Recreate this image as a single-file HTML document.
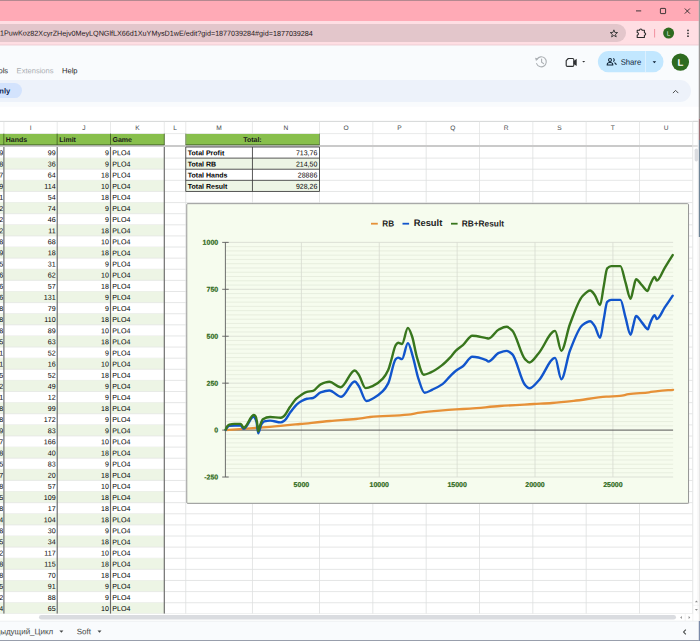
<!DOCTYPE html>
<html><head><meta charset="utf-8"><style>
html,body{margin:0;padding:0;width:700px;height:641px;overflow:hidden;background:#fff;}
svg{display:block;font-family:"Liberation Sans", sans-serif;}
</style></head><body>
<svg width="700" height="641" viewBox="0 0 700 641"><rect x="0.00" y="0.00" width="700.00" height="21.00" fill="#FFAAB6" /><rect x="0.00" y="0.00" width="700.00" height="1.00" fill="#B58890" /><rect x="0.00" y="21.00" width="700.00" height="24.20" fill="#FFDEE3" /><rect x="-30" y="24" width="656" height="18" rx="9" fill="#E3C6CB"/><text x="0.00" y="35.60" font-size="7.19" fill="#1E1719" text-anchor="start" font-weight="normal" transform="rotate(0.06 0.00 35.60)" >1PuwKoz82XcyrZHejv0MeyLQNGlfLX66d1XuYMysD1wE/edit?gid=1877039284#gid=1877039284</text><path d="M613.90 29.85 L614.87 32.42 L617.61 32.54 L615.47 34.26 L616.19 36.91 L613.90 35.40 L611.61 36.91 L612.33 34.26 L610.19 32.54 L612.93 32.42 Z" fill="none" stroke="#3a3a3a" stroke-width="0.95" stroke-linejoin="round"/><path d="M637.2 30.2 h2.3 a1.3 1.3 0 0 1 2.6 0 h2.3 v2.5 a1.3 1.3 0 0 1 0 2.6 v2.2 h-7.2 v-2.4 a1.3 1.3 0 0 0 0 -2.6 z" fill="none" stroke="#2a2a2a" stroke-width="1.05" stroke-linejoin="round"/><rect x="654.20" y="29.00" width="0.90" height="8.50" fill="#F08898" /><circle cx="668.6" cy="33.1" r="5.5" fill="#2E6B20"/><text x="668.60" y="35.60" font-size="6.2" fill="#E8F0E0" text-anchor="middle" font-weight="normal" transform="rotate(0.06 668.60 35.60)" >L</text><circle cx="688" cy="30.4" r="0.85" fill="#2a2a2a"/><circle cx="688" cy="33.3" r="0.85" fill="#2a2a2a"/><circle cx="688" cy="36.2" r="0.85" fill="#2a2a2a"/><line x1="636.00" y1="10.90" x2="641.20" y2="10.90" stroke="#2a2a2a" stroke-width="0.9" /><rect x="660.4" y="8.4" width="5.2" height="5.2" fill="none" stroke="#2a2a2a" stroke-width="0.9" rx="0.6"/><line x1="684.80" y1="8.50" x2="689.90" y2="13.60" stroke="#2a2a2a" stroke-width="0.9" /><line x1="689.90" y1="8.50" x2="684.80" y2="13.60" stroke="#2a2a2a" stroke-width="0.9" /><rect x="0.00" y="45.20" width="700.00" height="61.60" fill="#F9FBFD" /><rect x="0.00" y="44.60" width="700.00" height="0.80" fill="#E9C9CF" /><rect x="0.00" y="106.80" width="700.00" height="14.60" fill="#FFFFFF" /><text x="-9.50" y="73.30" font-size="7.55" fill="#1F1F1F" text-anchor="start" font-weight="normal" transform="rotate(0.06 -9.50 73.30)" >Tools</text><text x="16.60" y="73.30" font-size="7.55" fill="#A8ACB0" text-anchor="start" font-weight="normal" transform="rotate(0.06 16.60 73.30)" >Extensions</text><text x="62.00" y="73.30" font-size="7.55" fill="#1F1F1F" text-anchor="start" font-weight="normal" transform="rotate(0.06 62.00 73.30)" >Help</text><rect x="-20" y="80.1" width="711" height="21.9" rx="10.9" fill="#EDF2FA"/><rect x="-30" y="83.1" width="52" height="15" rx="7.5" fill="#D3E3FD"/><text x="10.20" y="93.60" font-size="7.55" fill="#0B2552" text-anchor="end" font-weight="bold" transform="rotate(0.06 10.20 93.60)" >nly</text><path d="M672.9 93.1 L675.6 90.4 L678.3 93.1" fill="none" stroke="#444746" stroke-width="0.95"/><g fill="none" stroke="#ACB0B4" stroke-width="1.1" stroke-linecap="round"><path d="M537.0 59.2 A5.0 5.0 0 1 1 536.6 63.6"/><path d="M541.6 59.0 v3.1 l2.0 1.5"/></g><path d="M535.0 57.8 L538.6 58.4 L536.0 61.0 Z" fill="#ACB0B4"/><g fill="none" stroke="#2f3133" stroke-width="1.15" stroke-linejoin="round"><path d="M566.2 60.6 L568.3 58.5 H572.6 Q573.8 58.5 573.8 59.7 V65.2 Q573.8 66.4 572.6 66.4 H567.4 Q566.2 66.4 566.2 65.2 Z"/></g><path d="M573.6 61.0 L576.7 58.8 V66.1 L573.6 63.9 Z" fill="#2f3133"/><path d="M582.2 61.0 h3.0 l-1.5 1.6 z" fill="#2f3133"/><rect x="597.9" y="51.1" width="65.6" height="21.2" rx="10.6" fill="#C2E7FF"/><rect x="645.00" y="51.10" width="0.70" height="21.20" fill="#E8F4FF" /><g fill="none" stroke="#0E2235" stroke-width="1.05"><circle cx="610.0" cy="60.0" r="1.45"/><path d="M607.2 65.0 v-0.5 q0-2.0 2.8-2.0 q2.8 0 2.8 2.0 v0.5 z"/><path d="M613.2 58.6 a1.45 1.45 0 0 1 0 2.8"/><path d="M614.3 62.7 q1.8 0.4 1.8 1.9 v0.4"/></g><text x="620.70" y="64.70" font-size="7.9" fill="#0E2235" text-anchor="start" font-weight="normal" transform="rotate(0.06 620.70 64.70)" textLength="20.5" lengthAdjust="spacingAndGlyphs">Share</text><path d="M652.6 61.2 h3.6 l-1.8 2.0 z" fill="#0E2235"/><circle cx="680.4" cy="62.1" r="8.7" fill="#2E6B20"/><text x="680.40" y="65.70" font-size="9.6" fill="#FFFFFF" text-anchor="middle" font-weight="bold" transform="rotate(0.06 680.40 65.70)" >L</text><rect x="0.00" y="121.40" width="692.83" height="12.20" fill="#FFFFFF" /><line x1="0.00" y1="121.40" x2="698.00" y2="121.40" stroke="#CFD1D1" stroke-width="0.9" /><line x1="0.00" y1="133.60" x2="692.83" y2="133.60" stroke="#E0E1E1" stroke-width="0.7" /><text x="30.55" y="129.90" font-size="6.6" fill="#45484C" text-anchor="middle" font-weight="normal" transform="rotate(0.06 30.55 129.90)" >I</text><text x="83.85" y="129.90" font-size="6.6" fill="#45484C" text-anchor="middle" font-weight="normal" transform="rotate(0.06 83.85 129.90)" >J</text><text x="137.40" y="129.90" font-size="6.6" fill="#45484C" text-anchor="middle" font-weight="normal" transform="rotate(0.06 137.40 129.90)" >K</text><text x="175.03" y="129.90" font-size="6.6" fill="#45484C" text-anchor="middle" font-weight="normal" transform="rotate(0.06 175.03 129.90)" >L</text><text x="219.10" y="129.90" font-size="6.6" fill="#45484C" text-anchor="middle" font-weight="normal" transform="rotate(0.06 219.10 129.90)" >M</text><text x="285.98" y="129.90" font-size="6.6" fill="#45484C" text-anchor="middle" font-weight="normal" transform="rotate(0.06 285.98 129.90)" >N</text><text x="346.16" y="129.90" font-size="6.6" fill="#45484C" text-anchor="middle" font-weight="normal" transform="rotate(0.06 346.16 129.90)" >O</text><text x="399.50" y="129.90" font-size="6.6" fill="#45484C" text-anchor="middle" font-weight="normal" transform="rotate(0.06 399.50 129.90)" >P</text><text x="452.83" y="129.90" font-size="6.6" fill="#45484C" text-anchor="middle" font-weight="normal" transform="rotate(0.06 452.83 129.90)" >Q</text><text x="506.17" y="129.90" font-size="6.6" fill="#45484C" text-anchor="middle" font-weight="normal" transform="rotate(0.06 506.17 129.90)" >R</text><text x="559.50" y="129.90" font-size="6.6" fill="#45484C" text-anchor="middle" font-weight="normal" transform="rotate(0.06 559.50 129.90)" >S</text><text x="612.83" y="129.90" font-size="6.6" fill="#45484C" text-anchor="middle" font-weight="normal" transform="rotate(0.06 612.83 129.90)" >T</text><text x="666.16" y="129.90" font-size="6.6" fill="#45484C" text-anchor="middle" font-weight="normal" transform="rotate(0.06 666.16 129.90)" >U</text><line x1="3.90" y1="121.40" x2="3.90" y2="133.60" stroke="#E0E1E1" stroke-width="0.7" /><line x1="57.20" y1="121.40" x2="57.20" y2="133.60" stroke="#E0E1E1" stroke-width="0.7" /><line x1="110.50" y1="121.40" x2="110.50" y2="133.60" stroke="#E0E1E1" stroke-width="0.7" /><line x1="164.30" y1="121.40" x2="164.30" y2="133.60" stroke="#E0E1E1" stroke-width="0.7" /><line x1="185.75" y1="121.40" x2="185.75" y2="133.60" stroke="#E0E1E1" stroke-width="0.7" /><line x1="252.45" y1="121.40" x2="252.45" y2="133.60" stroke="#E0E1E1" stroke-width="0.7" /><line x1="319.50" y1="121.40" x2="319.50" y2="133.60" stroke="#E0E1E1" stroke-width="0.7" /><line x1="372.83" y1="121.40" x2="372.83" y2="133.60" stroke="#E0E1E1" stroke-width="0.7" /><line x1="426.16" y1="121.40" x2="426.16" y2="133.60" stroke="#E0E1E1" stroke-width="0.7" /><line x1="479.50" y1="121.40" x2="479.50" y2="133.60" stroke="#E0E1E1" stroke-width="0.7" /><line x1="532.83" y1="121.40" x2="532.83" y2="133.60" stroke="#E0E1E1" stroke-width="0.7" /><line x1="586.16" y1="121.40" x2="586.16" y2="133.60" stroke="#E0E1E1" stroke-width="0.7" /><line x1="639.50" y1="121.40" x2="639.50" y2="133.60" stroke="#E0E1E1" stroke-width="0.7" /><line x1="692.83" y1="121.40" x2="692.83" y2="133.60" stroke="#E0E1E1" stroke-width="0.7" /><rect x="0.00" y="133.95" width="164.30" height="11.05" fill="#88BF4C" /><rect x="185.75" y="133.95" width="133.75" height="11.05" fill="#88BF4C" /><text x="5.80" y="141.90" font-size="7.0" fill="#1B1B1B" text-anchor="start" font-weight="bold" transform="rotate(0.06 5.80 141.90)" >Hands</text><text x="59.20" y="141.90" font-size="7.0" fill="#1B1B1B" text-anchor="start" font-weight="bold" transform="rotate(0.06 59.20 141.90)" >Limit</text><text x="112.50" y="141.90" font-size="7.0" fill="#1B1B1B" text-anchor="start" font-weight="bold" transform="rotate(0.06 112.50 141.90)" >Game</text><text x="252.45" y="141.90" font-size="7.0" fill="#1B1B1B" text-anchor="middle" font-weight="bold" transform="rotate(0.06 252.45 141.90)" >Total:</text><line x1="185.75" y1="133.60" x2="185.75" y2="145.00" stroke="#DEDFDF" stroke-width="0.7" /><line x1="319.50" y1="133.60" x2="319.50" y2="145.00" stroke="#DEDFDF" stroke-width="0.7" /><line x1="372.83" y1="133.60" x2="372.83" y2="145.00" stroke="#DEDFDF" stroke-width="0.7" /><line x1="426.16" y1="133.60" x2="426.16" y2="145.00" stroke="#DEDFDF" stroke-width="0.7" /><line x1="479.50" y1="133.60" x2="479.50" y2="145.00" stroke="#DEDFDF" stroke-width="0.7" /><line x1="532.83" y1="133.60" x2="532.83" y2="145.00" stroke="#DEDFDF" stroke-width="0.7" /><line x1="586.16" y1="133.60" x2="586.16" y2="145.00" stroke="#DEDFDF" stroke-width="0.7" /><line x1="639.50" y1="133.60" x2="639.50" y2="145.00" stroke="#DEDFDF" stroke-width="0.7" /><line x1="692.83" y1="133.60" x2="692.83" y2="145.00" stroke="#DEDFDF" stroke-width="0.7" /><line x1="3.80" y1="133.60" x2="3.80" y2="145.00" stroke="#3d5a22" stroke-width="0.8" /><line x1="57.15" y1="133.60" x2="57.15" y2="145.00" stroke="#3d5a22" stroke-width="0.8" /><line x1="110.50" y1="133.60" x2="110.50" y2="145.00" stroke="#3d5a22" stroke-width="0.8" /><line x1="164.30" y1="133.60" x2="164.30" y2="145.00" stroke="#3d5a22" stroke-width="0.8" /><line x1="185.75" y1="133.60" x2="185.75" y2="145.00" stroke="#3d5a22" stroke-width="0.6" /><line x1="319.50" y1="133.60" x2="319.50" y2="145.00" stroke="#3d5a22" stroke-width="0.6" /><rect x="0.00" y="145.00" width="692.83" height="2.00" fill="#CACACA" /><line x1="0.00" y1="144.80" x2="164.30" y2="144.80" stroke="#3F5A2A" stroke-width="0.8" /><line x1="185.75" y1="144.80" x2="319.50" y2="144.80" stroke="#3F5A2A" stroke-width="0.8" /><line x1="164.30" y1="158.12" x2="692.83" y2="158.12" stroke="#DEDFDF" stroke-width="0.8" /><line x1="0.00" y1="158.12" x2="164.30" y2="158.12" stroke="#E2E4E2" stroke-width="0.7" /><text x="3.20" y="155.35" font-size="7.1" fill="#000000" text-anchor="end" font-weight="normal" transform="rotate(0.06 3.20 155.35)" >9</text><text x="55.60" y="155.35" font-size="7.1" fill="#000000" text-anchor="end" font-weight="normal" transform="rotate(0.06 55.60 155.35)" >99</text><text x="108.90" y="155.35" font-size="7.1" fill="#000000" text-anchor="end" font-weight="normal" transform="rotate(0.06 108.90 155.35)" >9</text><text x="112.30" y="155.35" font-size="7.1" fill="#000000" text-anchor="start" font-weight="normal" transform="rotate(0.06 112.30 155.35)" >PLO4</text><rect x="0.00" y="158.12" width="164.30" height="11.12" fill="#EDF5E5" /><line x1="164.30" y1="169.23" x2="692.83" y2="169.23" stroke="#DEDFDF" stroke-width="0.8" /><line x1="0.00" y1="169.23" x2="164.30" y2="169.23" stroke="#E2E4E2" stroke-width="0.7" /><text x="3.20" y="166.47" font-size="7.1" fill="#000000" text-anchor="end" font-weight="normal" transform="rotate(0.06 3.20 166.47)" >8</text><text x="55.60" y="166.47" font-size="7.1" fill="#000000" text-anchor="end" font-weight="normal" transform="rotate(0.06 55.60 166.47)" >36</text><text x="108.90" y="166.47" font-size="7.1" fill="#000000" text-anchor="end" font-weight="normal" transform="rotate(0.06 108.90 166.47)" >9</text><text x="112.30" y="166.47" font-size="7.1" fill="#000000" text-anchor="start" font-weight="normal" transform="rotate(0.06 112.30 166.47)" >PLO4</text><line x1="164.30" y1="180.34" x2="692.83" y2="180.34" stroke="#DEDFDF" stroke-width="0.8" /><line x1="0.00" y1="180.34" x2="164.30" y2="180.34" stroke="#E2E4E2" stroke-width="0.7" /><text x="3.20" y="177.58" font-size="7.1" fill="#000000" text-anchor="end" font-weight="normal" transform="rotate(0.06 3.20 177.58)" >7</text><text x="55.60" y="177.58" font-size="7.1" fill="#000000" text-anchor="end" font-weight="normal" transform="rotate(0.06 55.60 177.58)" >64</text><text x="108.90" y="177.58" font-size="7.1" fill="#000000" text-anchor="end" font-weight="normal" transform="rotate(0.06 108.90 177.58)" >18</text><text x="112.30" y="177.58" font-size="7.1" fill="#000000" text-anchor="start" font-weight="normal" transform="rotate(0.06 112.30 177.58)" >PLO4</text><rect x="0.00" y="180.34" width="164.30" height="11.12" fill="#EDF5E5" /><line x1="164.30" y1="191.46" x2="692.83" y2="191.46" stroke="#DEDFDF" stroke-width="0.8" /><line x1="0.00" y1="191.46" x2="164.30" y2="191.46" stroke="#E2E4E2" stroke-width="0.7" /><text x="3.20" y="188.69" font-size="7.1" fill="#000000" text-anchor="end" font-weight="normal" transform="rotate(0.06 3.20 188.69)" >9</text><text x="55.60" y="188.69" font-size="7.1" fill="#000000" text-anchor="end" font-weight="normal" transform="rotate(0.06 55.60 188.69)" >114</text><text x="108.90" y="188.69" font-size="7.1" fill="#000000" text-anchor="end" font-weight="normal" transform="rotate(0.06 108.90 188.69)" >10</text><text x="112.30" y="188.69" font-size="7.1" fill="#000000" text-anchor="start" font-weight="normal" transform="rotate(0.06 112.30 188.69)" >PLO4</text><line x1="164.30" y1="202.58" x2="692.83" y2="202.58" stroke="#DEDFDF" stroke-width="0.8" /><line x1="0.00" y1="202.58" x2="164.30" y2="202.58" stroke="#E2E4E2" stroke-width="0.7" /><text x="3.20" y="199.81" font-size="7.1" fill="#000000" text-anchor="end" font-weight="normal" transform="rotate(0.06 3.20 199.81)" >1</text><text x="55.60" y="199.81" font-size="7.1" fill="#000000" text-anchor="end" font-weight="normal" transform="rotate(0.06 55.60 199.81)" >54</text><text x="108.90" y="199.81" font-size="7.1" fill="#000000" text-anchor="end" font-weight="normal" transform="rotate(0.06 108.90 199.81)" >18</text><text x="112.30" y="199.81" font-size="7.1" fill="#000000" text-anchor="start" font-weight="normal" transform="rotate(0.06 112.30 199.81)" >PLO4</text><rect x="0.00" y="202.57" width="164.30" height="11.12" fill="#EDF5E5" /><line x1="164.30" y1="213.69" x2="692.83" y2="213.69" stroke="#DEDFDF" stroke-width="0.8" /><line x1="0.00" y1="213.69" x2="164.30" y2="213.69" stroke="#E2E4E2" stroke-width="0.7" /><text x="3.20" y="210.92" font-size="7.1" fill="#000000" text-anchor="end" font-weight="normal" transform="rotate(0.06 3.20 210.92)" >2</text><text x="55.60" y="210.92" font-size="7.1" fill="#000000" text-anchor="end" font-weight="normal" transform="rotate(0.06 55.60 210.92)" >74</text><text x="108.90" y="210.92" font-size="7.1" fill="#000000" text-anchor="end" font-weight="normal" transform="rotate(0.06 108.90 210.92)" >9</text><text x="112.30" y="210.92" font-size="7.1" fill="#000000" text-anchor="start" font-weight="normal" transform="rotate(0.06 112.30 210.92)" >PLO4</text><line x1="164.30" y1="224.81" x2="692.83" y2="224.81" stroke="#DEDFDF" stroke-width="0.8" /><line x1="0.00" y1="224.81" x2="164.30" y2="224.81" stroke="#E2E4E2" stroke-width="0.7" /><text x="3.20" y="222.04" font-size="7.1" fill="#000000" text-anchor="end" font-weight="normal" transform="rotate(0.06 3.20 222.04)" >2</text><text x="55.60" y="222.04" font-size="7.1" fill="#000000" text-anchor="end" font-weight="normal" transform="rotate(0.06 55.60 222.04)" >46</text><text x="108.90" y="222.04" font-size="7.1" fill="#000000" text-anchor="end" font-weight="normal" transform="rotate(0.06 108.90 222.04)" >9</text><text x="112.30" y="222.04" font-size="7.1" fill="#000000" text-anchor="start" font-weight="normal" transform="rotate(0.06 112.30 222.04)" >PLO4</text><rect x="0.00" y="224.81" width="164.30" height="11.12" fill="#EDF5E5" /><line x1="164.30" y1="235.92" x2="692.83" y2="235.92" stroke="#DEDFDF" stroke-width="0.8" /><line x1="0.00" y1="235.92" x2="164.30" y2="235.92" stroke="#E2E4E2" stroke-width="0.7" /><text x="3.20" y="233.16" font-size="7.1" fill="#000000" text-anchor="end" font-weight="normal" transform="rotate(0.06 3.20 233.16)" >2</text><text x="55.60" y="233.16" font-size="7.1" fill="#000000" text-anchor="end" font-weight="normal" transform="rotate(0.06 55.60 233.16)" >11</text><text x="108.90" y="233.16" font-size="7.1" fill="#000000" text-anchor="end" font-weight="normal" transform="rotate(0.06 108.90 233.16)" >18</text><text x="112.30" y="233.16" font-size="7.1" fill="#000000" text-anchor="start" font-weight="normal" transform="rotate(0.06 112.30 233.16)" >PLO4</text><line x1="164.30" y1="247.04" x2="692.83" y2="247.04" stroke="#DEDFDF" stroke-width="0.8" /><line x1="0.00" y1="247.04" x2="164.30" y2="247.04" stroke="#E2E4E2" stroke-width="0.7" /><text x="3.20" y="244.27" font-size="7.1" fill="#000000" text-anchor="end" font-weight="normal" transform="rotate(0.06 3.20 244.27)" >8</text><text x="55.60" y="244.27" font-size="7.1" fill="#000000" text-anchor="end" font-weight="normal" transform="rotate(0.06 55.60 244.27)" >68</text><text x="108.90" y="244.27" font-size="7.1" fill="#000000" text-anchor="end" font-weight="normal" transform="rotate(0.06 108.90 244.27)" >10</text><text x="112.30" y="244.27" font-size="7.1" fill="#000000" text-anchor="start" font-weight="normal" transform="rotate(0.06 112.30 244.27)" >PLO4</text><rect x="0.00" y="247.03" width="164.30" height="11.12" fill="#EDF5E5" /><line x1="164.30" y1="258.15" x2="692.83" y2="258.15" stroke="#DEDFDF" stroke-width="0.8" /><line x1="0.00" y1="258.15" x2="164.30" y2="258.15" stroke="#E2E4E2" stroke-width="0.7" /><text x="3.20" y="255.38" font-size="7.1" fill="#000000" text-anchor="end" font-weight="normal" transform="rotate(0.06 3.20 255.38)" >9</text><text x="55.60" y="255.38" font-size="7.1" fill="#000000" text-anchor="end" font-weight="normal" transform="rotate(0.06 55.60 255.38)" >18</text><text x="108.90" y="255.38" font-size="7.1" fill="#000000" text-anchor="end" font-weight="normal" transform="rotate(0.06 108.90 255.38)" >18</text><text x="112.30" y="255.38" font-size="7.1" fill="#000000" text-anchor="start" font-weight="normal" transform="rotate(0.06 112.30 255.38)" >PLO4</text><line x1="164.30" y1="269.26" x2="692.83" y2="269.26" stroke="#DEDFDF" stroke-width="0.8" /><line x1="0.00" y1="269.26" x2="164.30" y2="269.26" stroke="#E2E4E2" stroke-width="0.7" /><text x="3.20" y="266.50" font-size="7.1" fill="#000000" text-anchor="end" font-weight="normal" transform="rotate(0.06 3.20 266.50)" >5</text><text x="55.60" y="266.50" font-size="7.1" fill="#000000" text-anchor="end" font-weight="normal" transform="rotate(0.06 55.60 266.50)" >31</text><text x="108.90" y="266.50" font-size="7.1" fill="#000000" text-anchor="end" font-weight="normal" transform="rotate(0.06 108.90 266.50)" >9</text><text x="112.30" y="266.50" font-size="7.1" fill="#000000" text-anchor="start" font-weight="normal" transform="rotate(0.06 112.30 266.50)" >PLO4</text><rect x="0.00" y="269.26" width="164.30" height="11.12" fill="#EDF5E5" /><line x1="164.30" y1="280.38" x2="692.83" y2="280.38" stroke="#DEDFDF" stroke-width="0.8" /><line x1="0.00" y1="280.38" x2="164.30" y2="280.38" stroke="#E2E4E2" stroke-width="0.7" /><text x="3.20" y="277.62" font-size="7.1" fill="#000000" text-anchor="end" font-weight="normal" transform="rotate(0.06 3.20 277.62)" >6</text><text x="55.60" y="277.62" font-size="7.1" fill="#000000" text-anchor="end" font-weight="normal" transform="rotate(0.06 55.60 277.62)" >62</text><text x="108.90" y="277.62" font-size="7.1" fill="#000000" text-anchor="end" font-weight="normal" transform="rotate(0.06 108.90 277.62)" >10</text><text x="112.30" y="277.62" font-size="7.1" fill="#000000" text-anchor="start" font-weight="normal" transform="rotate(0.06 112.30 277.62)" >PLO4</text><line x1="164.30" y1="291.50" x2="692.83" y2="291.50" stroke="#DEDFDF" stroke-width="0.8" /><line x1="0.00" y1="291.50" x2="164.30" y2="291.50" stroke="#E2E4E2" stroke-width="0.7" /><text x="3.20" y="288.73" font-size="7.1" fill="#000000" text-anchor="end" font-weight="normal" transform="rotate(0.06 3.20 288.73)" >6</text><text x="55.60" y="288.73" font-size="7.1" fill="#000000" text-anchor="end" font-weight="normal" transform="rotate(0.06 55.60 288.73)" >57</text><text x="108.90" y="288.73" font-size="7.1" fill="#000000" text-anchor="end" font-weight="normal" transform="rotate(0.06 108.90 288.73)" >18</text><text x="112.30" y="288.73" font-size="7.1" fill="#000000" text-anchor="start" font-weight="normal" transform="rotate(0.06 112.30 288.73)" >PLO4</text><rect x="0.00" y="291.50" width="164.30" height="11.12" fill="#EDF5E5" /><line x1="164.30" y1="302.61" x2="692.83" y2="302.61" stroke="#DEDFDF" stroke-width="0.8" /><line x1="0.00" y1="302.61" x2="164.30" y2="302.61" stroke="#E2E4E2" stroke-width="0.7" /><text x="3.20" y="299.85" font-size="7.1" fill="#000000" text-anchor="end" font-weight="normal" transform="rotate(0.06 3.20 299.85)" >6</text><text x="55.60" y="299.85" font-size="7.1" fill="#000000" text-anchor="end" font-weight="normal" transform="rotate(0.06 55.60 299.85)" >131</text><text x="108.90" y="299.85" font-size="7.1" fill="#000000" text-anchor="end" font-weight="normal" transform="rotate(0.06 108.90 299.85)" >9</text><text x="112.30" y="299.85" font-size="7.1" fill="#000000" text-anchor="start" font-weight="normal" transform="rotate(0.06 112.30 299.85)" >PLO4</text><line x1="164.30" y1="313.73" x2="692.83" y2="313.73" stroke="#DEDFDF" stroke-width="0.8" /><line x1="0.00" y1="313.73" x2="164.30" y2="313.73" stroke="#E2E4E2" stroke-width="0.7" /><text x="3.20" y="310.96" font-size="7.1" fill="#000000" text-anchor="end" font-weight="normal" transform="rotate(0.06 3.20 310.96)" >8</text><text x="55.60" y="310.96" font-size="7.1" fill="#000000" text-anchor="end" font-weight="normal" transform="rotate(0.06 55.60 310.96)" >79</text><text x="108.90" y="310.96" font-size="7.1" fill="#000000" text-anchor="end" font-weight="normal" transform="rotate(0.06 108.90 310.96)" >9</text><text x="112.30" y="310.96" font-size="7.1" fill="#000000" text-anchor="start" font-weight="normal" transform="rotate(0.06 112.30 310.96)" >PLO4</text><rect x="0.00" y="313.73" width="164.30" height="11.12" fill="#EDF5E5" /><line x1="164.30" y1="324.84" x2="692.83" y2="324.84" stroke="#DEDFDF" stroke-width="0.8" /><line x1="0.00" y1="324.84" x2="164.30" y2="324.84" stroke="#E2E4E2" stroke-width="0.7" /><text x="3.20" y="322.08" font-size="7.1" fill="#000000" text-anchor="end" font-weight="normal" transform="rotate(0.06 3.20 322.08)" >8</text><text x="55.60" y="322.08" font-size="7.1" fill="#000000" text-anchor="end" font-weight="normal" transform="rotate(0.06 55.60 322.08)" >110</text><text x="108.90" y="322.08" font-size="7.1" fill="#000000" text-anchor="end" font-weight="normal" transform="rotate(0.06 108.90 322.08)" >18</text><text x="112.30" y="322.08" font-size="7.1" fill="#000000" text-anchor="start" font-weight="normal" transform="rotate(0.06 112.30 322.08)" >PLO4</text><line x1="164.30" y1="335.96" x2="692.83" y2="335.96" stroke="#DEDFDF" stroke-width="0.8" /><line x1="0.00" y1="335.96" x2="164.30" y2="335.96" stroke="#E2E4E2" stroke-width="0.7" /><text x="3.20" y="333.19" font-size="7.1" fill="#000000" text-anchor="end" font-weight="normal" transform="rotate(0.06 3.20 333.19)" >8</text><text x="55.60" y="333.19" font-size="7.1" fill="#000000" text-anchor="end" font-weight="normal" transform="rotate(0.06 55.60 333.19)" >89</text><text x="108.90" y="333.19" font-size="7.1" fill="#000000" text-anchor="end" font-weight="normal" transform="rotate(0.06 108.90 333.19)" >10</text><text x="112.30" y="333.19" font-size="7.1" fill="#000000" text-anchor="start" font-weight="normal" transform="rotate(0.06 112.30 333.19)" >PLO4</text><rect x="0.00" y="335.96" width="164.30" height="11.12" fill="#EDF5E5" /><line x1="164.30" y1="347.07" x2="692.83" y2="347.07" stroke="#DEDFDF" stroke-width="0.8" /><line x1="0.00" y1="347.07" x2="164.30" y2="347.07" stroke="#E2E4E2" stroke-width="0.7" /><text x="3.20" y="344.31" font-size="7.1" fill="#000000" text-anchor="end" font-weight="normal" transform="rotate(0.06 3.20 344.31)" >5</text><text x="55.60" y="344.31" font-size="7.1" fill="#000000" text-anchor="end" font-weight="normal" transform="rotate(0.06 55.60 344.31)" >63</text><text x="108.90" y="344.31" font-size="7.1" fill="#000000" text-anchor="end" font-weight="normal" transform="rotate(0.06 108.90 344.31)" >18</text><text x="112.30" y="344.31" font-size="7.1" fill="#000000" text-anchor="start" font-weight="normal" transform="rotate(0.06 112.30 344.31)" >PLO4</text><line x1="164.30" y1="358.19" x2="692.83" y2="358.19" stroke="#DEDFDF" stroke-width="0.8" /><line x1="0.00" y1="358.19" x2="164.30" y2="358.19" stroke="#E2E4E2" stroke-width="0.7" /><text x="3.20" y="355.42" font-size="7.1" fill="#000000" text-anchor="end" font-weight="normal" transform="rotate(0.06 3.20 355.42)" >1</text><text x="55.60" y="355.42" font-size="7.1" fill="#000000" text-anchor="end" font-weight="normal" transform="rotate(0.06 55.60 355.42)" >52</text><text x="108.90" y="355.42" font-size="7.1" fill="#000000" text-anchor="end" font-weight="normal" transform="rotate(0.06 108.90 355.42)" >9</text><text x="112.30" y="355.42" font-size="7.1" fill="#000000" text-anchor="start" font-weight="normal" transform="rotate(0.06 112.30 355.42)" >PLO4</text><rect x="0.00" y="358.19" width="164.30" height="11.12" fill="#EDF5E5" /><line x1="164.30" y1="369.30" x2="692.83" y2="369.30" stroke="#DEDFDF" stroke-width="0.8" /><line x1="0.00" y1="369.30" x2="164.30" y2="369.30" stroke="#E2E4E2" stroke-width="0.7" /><text x="3.20" y="366.54" font-size="7.1" fill="#000000" text-anchor="end" font-weight="normal" transform="rotate(0.06 3.20 366.54)" >1</text><text x="55.60" y="366.54" font-size="7.1" fill="#000000" text-anchor="end" font-weight="normal" transform="rotate(0.06 55.60 366.54)" >16</text><text x="108.90" y="366.54" font-size="7.1" fill="#000000" text-anchor="end" font-weight="normal" transform="rotate(0.06 108.90 366.54)" >10</text><text x="112.30" y="366.54" font-size="7.1" fill="#000000" text-anchor="start" font-weight="normal" transform="rotate(0.06 112.30 366.54)" >PLO4</text><line x1="164.30" y1="380.42" x2="692.83" y2="380.42" stroke="#DEDFDF" stroke-width="0.8" /><line x1="0.00" y1="380.42" x2="164.30" y2="380.42" stroke="#E2E4E2" stroke-width="0.7" /><text x="3.20" y="377.65" font-size="7.1" fill="#000000" text-anchor="end" font-weight="normal" transform="rotate(0.06 3.20 377.65)" >5</text><text x="55.60" y="377.65" font-size="7.1" fill="#000000" text-anchor="end" font-weight="normal" transform="rotate(0.06 55.60 377.65)" >52</text><text x="108.90" y="377.65" font-size="7.1" fill="#000000" text-anchor="end" font-weight="normal" transform="rotate(0.06 108.90 377.65)" >18</text><text x="112.30" y="377.65" font-size="7.1" fill="#000000" text-anchor="start" font-weight="normal" transform="rotate(0.06 112.30 377.65)" >PLO4</text><rect x="0.00" y="380.41" width="164.30" height="11.12" fill="#EDF5E5" /><line x1="164.30" y1="391.53" x2="692.83" y2="391.53" stroke="#DEDFDF" stroke-width="0.8" /><line x1="0.00" y1="391.53" x2="164.30" y2="391.53" stroke="#E2E4E2" stroke-width="0.7" /><text x="3.20" y="388.76" font-size="7.1" fill="#000000" text-anchor="end" font-weight="normal" transform="rotate(0.06 3.20 388.76)" >2</text><text x="55.60" y="388.76" font-size="7.1" fill="#000000" text-anchor="end" font-weight="normal" transform="rotate(0.06 55.60 388.76)" >49</text><text x="108.90" y="388.76" font-size="7.1" fill="#000000" text-anchor="end" font-weight="normal" transform="rotate(0.06 108.90 388.76)" >9</text><text x="112.30" y="388.76" font-size="7.1" fill="#000000" text-anchor="start" font-weight="normal" transform="rotate(0.06 112.30 388.76)" >PLO4</text><line x1="164.30" y1="402.64" x2="692.83" y2="402.64" stroke="#DEDFDF" stroke-width="0.8" /><line x1="0.00" y1="402.64" x2="164.30" y2="402.64" stroke="#E2E4E2" stroke-width="0.7" /><text x="3.20" y="399.88" font-size="7.1" fill="#000000" text-anchor="end" font-weight="normal" transform="rotate(0.06 3.20 399.88)" >1</text><text x="55.60" y="399.88" font-size="7.1" fill="#000000" text-anchor="end" font-weight="normal" transform="rotate(0.06 55.60 399.88)" >12</text><text x="108.90" y="399.88" font-size="7.1" fill="#000000" text-anchor="end" font-weight="normal" transform="rotate(0.06 108.90 399.88)" >9</text><text x="112.30" y="399.88" font-size="7.1" fill="#000000" text-anchor="start" font-weight="normal" transform="rotate(0.06 112.30 399.88)" >PLO4</text><rect x="0.00" y="402.64" width="164.30" height="11.12" fill="#EDF5E5" /><line x1="164.30" y1="413.76" x2="692.83" y2="413.76" stroke="#DEDFDF" stroke-width="0.8" /><line x1="0.00" y1="413.76" x2="164.30" y2="413.76" stroke="#E2E4E2" stroke-width="0.7" /><text x="3.20" y="411.00" font-size="7.1" fill="#000000" text-anchor="end" font-weight="normal" transform="rotate(0.06 3.20 411.00)" >8</text><text x="55.60" y="411.00" font-size="7.1" fill="#000000" text-anchor="end" font-weight="normal" transform="rotate(0.06 55.60 411.00)" >99</text><text x="108.90" y="411.00" font-size="7.1" fill="#000000" text-anchor="end" font-weight="normal" transform="rotate(0.06 108.90 411.00)" >18</text><text x="112.30" y="411.00" font-size="7.1" fill="#000000" text-anchor="start" font-weight="normal" transform="rotate(0.06 112.30 411.00)" >PLO4</text><line x1="164.30" y1="424.88" x2="692.83" y2="424.88" stroke="#DEDFDF" stroke-width="0.8" /><line x1="0.00" y1="424.88" x2="164.30" y2="424.88" stroke="#E2E4E2" stroke-width="0.7" /><text x="3.20" y="422.11" font-size="7.1" fill="#000000" text-anchor="end" font-weight="normal" transform="rotate(0.06 3.20 422.11)" >8</text><text x="55.60" y="422.11" font-size="7.1" fill="#000000" text-anchor="end" font-weight="normal" transform="rotate(0.06 55.60 422.11)" >172</text><text x="108.90" y="422.11" font-size="7.1" fill="#000000" text-anchor="end" font-weight="normal" transform="rotate(0.06 108.90 422.11)" >9</text><text x="112.30" y="422.11" font-size="7.1" fill="#000000" text-anchor="start" font-weight="normal" transform="rotate(0.06 112.30 422.11)" >PLO4</text><rect x="0.00" y="424.88" width="164.30" height="11.12" fill="#EDF5E5" /><line x1="164.30" y1="435.99" x2="692.83" y2="435.99" stroke="#DEDFDF" stroke-width="0.8" /><line x1="0.00" y1="435.99" x2="164.30" y2="435.99" stroke="#E2E4E2" stroke-width="0.7" /><text x="3.20" y="433.23" font-size="7.1" fill="#000000" text-anchor="end" font-weight="normal" transform="rotate(0.06 3.20 433.23)" >9</text><text x="55.60" y="433.23" font-size="7.1" fill="#000000" text-anchor="end" font-weight="normal" transform="rotate(0.06 55.60 433.23)" >83</text><text x="108.90" y="433.23" font-size="7.1" fill="#000000" text-anchor="end" font-weight="normal" transform="rotate(0.06 108.90 433.23)" >9</text><text x="112.30" y="433.23" font-size="7.1" fill="#000000" text-anchor="start" font-weight="normal" transform="rotate(0.06 112.30 433.23)" >PLO4</text><line x1="164.30" y1="447.11" x2="692.83" y2="447.11" stroke="#DEDFDF" stroke-width="0.8" /><line x1="0.00" y1="447.11" x2="164.30" y2="447.11" stroke="#E2E4E2" stroke-width="0.7" /><text x="3.20" y="444.34" font-size="7.1" fill="#000000" text-anchor="end" font-weight="normal" transform="rotate(0.06 3.20 444.34)" >7</text><text x="55.60" y="444.34" font-size="7.1" fill="#000000" text-anchor="end" font-weight="normal" transform="rotate(0.06 55.60 444.34)" >166</text><text x="108.90" y="444.34" font-size="7.1" fill="#000000" text-anchor="end" font-weight="normal" transform="rotate(0.06 108.90 444.34)" >10</text><text x="112.30" y="444.34" font-size="7.1" fill="#000000" text-anchor="start" font-weight="normal" transform="rotate(0.06 112.30 444.34)" >PLO4</text><rect x="0.00" y="447.11" width="164.30" height="11.12" fill="#EDF5E5" /><line x1="164.30" y1="458.22" x2="692.83" y2="458.22" stroke="#DEDFDF" stroke-width="0.8" /><line x1="0.00" y1="458.22" x2="164.30" y2="458.22" stroke="#E2E4E2" stroke-width="0.7" /><text x="3.20" y="455.46" font-size="7.1" fill="#000000" text-anchor="end" font-weight="normal" transform="rotate(0.06 3.20 455.46)" >8</text><text x="55.60" y="455.46" font-size="7.1" fill="#000000" text-anchor="end" font-weight="normal" transform="rotate(0.06 55.60 455.46)" >40</text><text x="108.90" y="455.46" font-size="7.1" fill="#000000" text-anchor="end" font-weight="normal" transform="rotate(0.06 108.90 455.46)" >18</text><text x="112.30" y="455.46" font-size="7.1" fill="#000000" text-anchor="start" font-weight="normal" transform="rotate(0.06 112.30 455.46)" >PLO4</text><line x1="164.30" y1="469.34" x2="692.83" y2="469.34" stroke="#DEDFDF" stroke-width="0.8" /><line x1="0.00" y1="469.34" x2="164.30" y2="469.34" stroke="#E2E4E2" stroke-width="0.7" /><text x="3.20" y="466.57" font-size="7.1" fill="#000000" text-anchor="end" font-weight="normal" transform="rotate(0.06 3.20 466.57)" >5</text><text x="55.60" y="466.57" font-size="7.1" fill="#000000" text-anchor="end" font-weight="normal" transform="rotate(0.06 55.60 466.57)" >83</text><text x="108.90" y="466.57" font-size="7.1" fill="#000000" text-anchor="end" font-weight="normal" transform="rotate(0.06 108.90 466.57)" >9</text><text x="112.30" y="466.57" font-size="7.1" fill="#000000" text-anchor="start" font-weight="normal" transform="rotate(0.06 112.30 466.57)" >PLO4</text><rect x="0.00" y="469.33" width="164.30" height="11.12" fill="#EDF5E5" /><line x1="164.30" y1="480.45" x2="692.83" y2="480.45" stroke="#DEDFDF" stroke-width="0.8" /><line x1="0.00" y1="480.45" x2="164.30" y2="480.45" stroke="#E2E4E2" stroke-width="0.7" /><text x="3.20" y="477.69" font-size="7.1" fill="#000000" text-anchor="end" font-weight="normal" transform="rotate(0.06 3.20 477.69)" >7</text><text x="55.60" y="477.69" font-size="7.1" fill="#000000" text-anchor="end" font-weight="normal" transform="rotate(0.06 55.60 477.69)" >20</text><text x="108.90" y="477.69" font-size="7.1" fill="#000000" text-anchor="end" font-weight="normal" transform="rotate(0.06 108.90 477.69)" >18</text><text x="112.30" y="477.69" font-size="7.1" fill="#000000" text-anchor="start" font-weight="normal" transform="rotate(0.06 112.30 477.69)" >PLO4</text><line x1="164.30" y1="491.56" x2="692.83" y2="491.56" stroke="#DEDFDF" stroke-width="0.8" /><line x1="0.00" y1="491.56" x2="164.30" y2="491.56" stroke="#E2E4E2" stroke-width="0.7" /><text x="3.20" y="488.80" font-size="7.1" fill="#000000" text-anchor="end" font-weight="normal" transform="rotate(0.06 3.20 488.80)" >8</text><text x="55.60" y="488.80" font-size="7.1" fill="#000000" text-anchor="end" font-weight="normal" transform="rotate(0.06 55.60 488.80)" >57</text><text x="108.90" y="488.80" font-size="7.1" fill="#000000" text-anchor="end" font-weight="normal" transform="rotate(0.06 108.90 488.80)" >10</text><text x="112.30" y="488.80" font-size="7.1" fill="#000000" text-anchor="start" font-weight="normal" transform="rotate(0.06 112.30 488.80)" >PLO4</text><rect x="0.00" y="491.56" width="164.30" height="11.12" fill="#EDF5E5" /><line x1="164.30" y1="502.68" x2="692.83" y2="502.68" stroke="#DEDFDF" stroke-width="0.8" /><line x1="0.00" y1="502.68" x2="164.30" y2="502.68" stroke="#E2E4E2" stroke-width="0.7" /><text x="3.20" y="499.92" font-size="7.1" fill="#000000" text-anchor="end" font-weight="normal" transform="rotate(0.06 3.20 499.92)" >5</text><text x="55.60" y="499.92" font-size="7.1" fill="#000000" text-anchor="end" font-weight="normal" transform="rotate(0.06 55.60 499.92)" >109</text><text x="108.90" y="499.92" font-size="7.1" fill="#000000" text-anchor="end" font-weight="normal" transform="rotate(0.06 108.90 499.92)" >18</text><text x="112.30" y="499.92" font-size="7.1" fill="#000000" text-anchor="start" font-weight="normal" transform="rotate(0.06 112.30 499.92)" >PLO4</text><line x1="164.30" y1="513.79" x2="692.83" y2="513.79" stroke="#DEDFDF" stroke-width="0.8" /><line x1="0.00" y1="513.79" x2="164.30" y2="513.79" stroke="#E2E4E2" stroke-width="0.7" /><text x="3.20" y="511.03" font-size="7.1" fill="#000000" text-anchor="end" font-weight="normal" transform="rotate(0.06 3.20 511.03)" >8</text><text x="55.60" y="511.03" font-size="7.1" fill="#000000" text-anchor="end" font-weight="normal" transform="rotate(0.06 55.60 511.03)" >17</text><text x="108.90" y="511.03" font-size="7.1" fill="#000000" text-anchor="end" font-weight="normal" transform="rotate(0.06 108.90 511.03)" >18</text><text x="112.30" y="511.03" font-size="7.1" fill="#000000" text-anchor="start" font-weight="normal" transform="rotate(0.06 112.30 511.03)" >PLO4</text><rect x="0.00" y="513.80" width="164.30" height="11.12" fill="#EDF5E5" /><line x1="164.30" y1="524.91" x2="692.83" y2="524.91" stroke="#DEDFDF" stroke-width="0.8" /><line x1="0.00" y1="524.91" x2="164.30" y2="524.91" stroke="#E2E4E2" stroke-width="0.7" /><text x="3.20" y="522.15" font-size="7.1" fill="#000000" text-anchor="end" font-weight="normal" transform="rotate(0.06 3.20 522.15)" >4</text><text x="55.60" y="522.15" font-size="7.1" fill="#000000" text-anchor="end" font-weight="normal" transform="rotate(0.06 55.60 522.15)" >104</text><text x="108.90" y="522.15" font-size="7.1" fill="#000000" text-anchor="end" font-weight="normal" transform="rotate(0.06 108.90 522.15)" >18</text><text x="112.30" y="522.15" font-size="7.1" fill="#000000" text-anchor="start" font-weight="normal" transform="rotate(0.06 112.30 522.15)" >PLO4</text><line x1="164.30" y1="536.03" x2="692.83" y2="536.03" stroke="#DEDFDF" stroke-width="0.8" /><line x1="0.00" y1="536.03" x2="164.30" y2="536.03" stroke="#E2E4E2" stroke-width="0.7" /><text x="3.20" y="533.26" font-size="7.1" fill="#000000" text-anchor="end" font-weight="normal" transform="rotate(0.06 3.20 533.26)" >8</text><text x="55.60" y="533.26" font-size="7.1" fill="#000000" text-anchor="end" font-weight="normal" transform="rotate(0.06 55.60 533.26)" >30</text><text x="108.90" y="533.26" font-size="7.1" fill="#000000" text-anchor="end" font-weight="normal" transform="rotate(0.06 108.90 533.26)" >9</text><text x="112.30" y="533.26" font-size="7.1" fill="#000000" text-anchor="start" font-weight="normal" transform="rotate(0.06 112.30 533.26)" >PLO4</text><rect x="0.00" y="536.03" width="164.30" height="11.12" fill="#EDF5E5" /><line x1="164.30" y1="547.14" x2="692.83" y2="547.14" stroke="#DEDFDF" stroke-width="0.8" /><line x1="0.00" y1="547.14" x2="164.30" y2="547.14" stroke="#E2E4E2" stroke-width="0.7" /><text x="3.20" y="544.38" font-size="7.1" fill="#000000" text-anchor="end" font-weight="normal" transform="rotate(0.06 3.20 544.38)" >5</text><text x="55.60" y="544.38" font-size="7.1" fill="#000000" text-anchor="end" font-weight="normal" transform="rotate(0.06 55.60 544.38)" >34</text><text x="108.90" y="544.38" font-size="7.1" fill="#000000" text-anchor="end" font-weight="normal" transform="rotate(0.06 108.90 544.38)" >18</text><text x="112.30" y="544.38" font-size="7.1" fill="#000000" text-anchor="start" font-weight="normal" transform="rotate(0.06 112.30 544.38)" >PLO4</text><line x1="164.30" y1="558.25" x2="692.83" y2="558.25" stroke="#DEDFDF" stroke-width="0.8" /><line x1="0.00" y1="558.25" x2="164.30" y2="558.25" stroke="#E2E4E2" stroke-width="0.7" /><text x="3.20" y="555.49" font-size="7.1" fill="#000000" text-anchor="end" font-weight="normal" transform="rotate(0.06 3.20 555.49)" >2</text><text x="55.60" y="555.49" font-size="7.1" fill="#000000" text-anchor="end" font-weight="normal" transform="rotate(0.06 55.60 555.49)" >117</text><text x="108.90" y="555.49" font-size="7.1" fill="#000000" text-anchor="end" font-weight="normal" transform="rotate(0.06 108.90 555.49)" >10</text><text x="112.30" y="555.49" font-size="7.1" fill="#000000" text-anchor="start" font-weight="normal" transform="rotate(0.06 112.30 555.49)" >PLO4</text><rect x="0.00" y="558.25" width="164.30" height="11.12" fill="#EDF5E5" /><line x1="164.30" y1="569.37" x2="692.83" y2="569.37" stroke="#DEDFDF" stroke-width="0.8" /><line x1="0.00" y1="569.37" x2="164.30" y2="569.37" stroke="#E2E4E2" stroke-width="0.7" /><text x="3.20" y="566.61" font-size="7.1" fill="#000000" text-anchor="end" font-weight="normal" transform="rotate(0.06 3.20 566.61)" >8</text><text x="55.60" y="566.61" font-size="7.1" fill="#000000" text-anchor="end" font-weight="normal" transform="rotate(0.06 55.60 566.61)" >115</text><text x="108.90" y="566.61" font-size="7.1" fill="#000000" text-anchor="end" font-weight="normal" transform="rotate(0.06 108.90 566.61)" >18</text><text x="112.30" y="566.61" font-size="7.1" fill="#000000" text-anchor="start" font-weight="normal" transform="rotate(0.06 112.30 566.61)" >PLO4</text><line x1="164.30" y1="580.49" x2="692.83" y2="580.49" stroke="#DEDFDF" stroke-width="0.8" /><line x1="0.00" y1="580.49" x2="164.30" y2="580.49" stroke="#E2E4E2" stroke-width="0.7" /><text x="3.20" y="577.72" font-size="7.1" fill="#000000" text-anchor="end" font-weight="normal" transform="rotate(0.06 3.20 577.72)" >8</text><text x="55.60" y="577.72" font-size="7.1" fill="#000000" text-anchor="end" font-weight="normal" transform="rotate(0.06 55.60 577.72)" >70</text><text x="108.90" y="577.72" font-size="7.1" fill="#000000" text-anchor="end" font-weight="normal" transform="rotate(0.06 108.90 577.72)" >18</text><text x="112.30" y="577.72" font-size="7.1" fill="#000000" text-anchor="start" font-weight="normal" transform="rotate(0.06 112.30 577.72)" >PLO4</text><rect x="0.00" y="580.49" width="164.30" height="11.12" fill="#EDF5E5" /><line x1="164.30" y1="591.60" x2="692.83" y2="591.60" stroke="#DEDFDF" stroke-width="0.8" /><line x1="0.00" y1="591.60" x2="164.30" y2="591.60" stroke="#E2E4E2" stroke-width="0.7" /><text x="3.20" y="588.84" font-size="7.1" fill="#000000" text-anchor="end" font-weight="normal" transform="rotate(0.06 3.20 588.84)" >5</text><text x="55.60" y="588.84" font-size="7.1" fill="#000000" text-anchor="end" font-weight="normal" transform="rotate(0.06 55.60 588.84)" >91</text><text x="108.90" y="588.84" font-size="7.1" fill="#000000" text-anchor="end" font-weight="normal" transform="rotate(0.06 108.90 588.84)" >9</text><text x="112.30" y="588.84" font-size="7.1" fill="#000000" text-anchor="start" font-weight="normal" transform="rotate(0.06 112.30 588.84)" >PLO4</text><line x1="164.30" y1="602.72" x2="692.83" y2="602.72" stroke="#DEDFDF" stroke-width="0.8" /><line x1="0.00" y1="602.72" x2="164.30" y2="602.72" stroke="#E2E4E2" stroke-width="0.7" /><text x="3.20" y="599.95" font-size="7.1" fill="#000000" text-anchor="end" font-weight="normal" transform="rotate(0.06 3.20 599.95)" >2</text><text x="55.60" y="599.95" font-size="7.1" fill="#000000" text-anchor="end" font-weight="normal" transform="rotate(0.06 55.60 599.95)" >88</text><text x="108.90" y="599.95" font-size="7.1" fill="#000000" text-anchor="end" font-weight="normal" transform="rotate(0.06 108.90 599.95)" >9</text><text x="112.30" y="599.95" font-size="7.1" fill="#000000" text-anchor="start" font-weight="normal" transform="rotate(0.06 112.30 599.95)" >PLO4</text><rect x="0.00" y="602.72" width="164.30" height="11.12" fill="#EDF5E5" /><line x1="164.30" y1="613.83" x2="692.83" y2="613.83" stroke="#DEDFDF" stroke-width="0.8" /><line x1="0.00" y1="613.83" x2="164.30" y2="613.83" stroke="#E2E4E2" stroke-width="0.7" /><text x="3.20" y="611.07" font-size="7.1" fill="#000000" text-anchor="end" font-weight="normal" transform="rotate(0.06 3.20 611.07)" >4</text><text x="55.60" y="611.07" font-size="7.1" fill="#000000" text-anchor="end" font-weight="normal" transform="rotate(0.06 55.60 611.07)" >65</text><text x="108.90" y="611.07" font-size="7.1" fill="#000000" text-anchor="end" font-weight="normal" transform="rotate(0.06 108.90 611.07)" >10</text><text x="112.30" y="611.07" font-size="7.1" fill="#000000" text-anchor="start" font-weight="normal" transform="rotate(0.06 112.30 611.07)" >PLO4</text><line x1="185.75" y1="147.00" x2="185.75" y2="613.83" stroke="#DEDFDF" stroke-width="0.8" /><line x1="252.45" y1="147.00" x2="252.45" y2="613.83" stroke="#DEDFDF" stroke-width="0.8" /><line x1="319.50" y1="147.00" x2="319.50" y2="613.83" stroke="#DEDFDF" stroke-width="0.8" /><line x1="372.83" y1="147.00" x2="372.83" y2="613.83" stroke="#DEDFDF" stroke-width="0.8" /><line x1="426.16" y1="147.00" x2="426.16" y2="613.83" stroke="#DEDFDF" stroke-width="0.8" /><line x1="479.50" y1="147.00" x2="479.50" y2="613.83" stroke="#DEDFDF" stroke-width="0.8" /><line x1="532.83" y1="147.00" x2="532.83" y2="613.83" stroke="#DEDFDF" stroke-width="0.8" /><line x1="586.16" y1="147.00" x2="586.16" y2="613.83" stroke="#DEDFDF" stroke-width="0.8" /><line x1="639.50" y1="147.00" x2="639.50" y2="613.83" stroke="#DEDFDF" stroke-width="0.8" /><line x1="692.83" y1="147.00" x2="692.83" y2="613.83" stroke="#DEDFDF" stroke-width="0.8" /><line x1="3.90" y1="147.00" x2="3.90" y2="613.83" stroke="#6A6A6A" stroke-width="1.15" /><line x1="57.20" y1="147.00" x2="57.20" y2="613.83" stroke="#6A6A6A" stroke-width="1.15" /><line x1="110.50" y1="147.00" x2="110.50" y2="613.83" stroke="#6A6A6A" stroke-width="1.15" /><line x1="164.30" y1="147.00" x2="164.30" y2="613.83" stroke="#6A6A6A" stroke-width="1.15" /><rect x="185.75" y="147.00" width="133.75" height="11.12" fill="#FFFFFF" /><text x="187.80" y="155.35" font-size="7.0" fill="#000000" text-anchor="start" font-weight="bold" transform="rotate(0.06 187.80 155.35)" >Total Profit</text><text x="317.30" y="155.35" font-size="7.0" fill="#000000" text-anchor="end" font-weight="normal" transform="rotate(0.06 317.30 155.35)" >713,76</text><rect x="185.75" y="158.12" width="133.75" height="11.12" fill="#EDF5E5" /><text x="187.80" y="166.47" font-size="7.0" fill="#000000" text-anchor="start" font-weight="bold" transform="rotate(0.06 187.80 166.47)" >Total RB</text><text x="317.30" y="166.47" font-size="7.0" fill="#000000" text-anchor="end" font-weight="normal" transform="rotate(0.06 317.30 166.47)" >214,50</text><rect x="185.75" y="169.23" width="133.75" height="11.12" fill="#FFFFFF" /><text x="187.80" y="177.58" font-size="7.0" fill="#000000" text-anchor="start" font-weight="bold" transform="rotate(0.06 187.80 177.58)" >Total Hands</text><text x="317.30" y="177.58" font-size="7.0" fill="#000000" text-anchor="end" font-weight="normal" transform="rotate(0.06 317.30 177.58)" >28886</text><rect x="185.75" y="180.34" width="133.75" height="11.12" fill="#EDF5E5" /><text x="187.80" y="188.69" font-size="7.0" fill="#000000" text-anchor="start" font-weight="bold" transform="rotate(0.06 187.80 188.69)" >Total Result</text><text x="317.30" y="188.69" font-size="7.0" fill="#000000" text-anchor="end" font-weight="normal" transform="rotate(0.06 317.30 188.69)" >928,26</text><line x1="185.75" y1="147.00" x2="319.50" y2="147.00" stroke="#3A3A3A" stroke-width="0.85" /><line x1="185.75" y1="158.12" x2="319.50" y2="158.12" stroke="#3A3A3A" stroke-width="0.85" /><line x1="185.75" y1="169.23" x2="319.50" y2="169.23" stroke="#3A3A3A" stroke-width="0.85" /><line x1="185.75" y1="180.34" x2="319.50" y2="180.34" stroke="#3A3A3A" stroke-width="0.85" /><line x1="185.75" y1="191.46" x2="319.50" y2="191.46" stroke="#3A3A3A" stroke-width="0.85" /><line x1="185.75" y1="147.00" x2="185.75" y2="191.46" stroke="#3A3A3A" stroke-width="0.85" /><line x1="252.45" y1="147.00" x2="252.45" y2="191.46" stroke="#3A3A3A" stroke-width="0.85" /><line x1="319.50" y1="147.00" x2="319.50" y2="191.46" stroke="#3A3A3A" stroke-width="0.85" /><rect x="187.35" y="204.25" width="501.75" height="299.65" fill="#CFCFCF"/><rect x="186.75" y="203.65" width="501.75" height="299.65" fill="#F6FCEE" stroke="#8E8E8E" rx="1" stroke-width="0.9"/><line x1="225.40" y1="472.76" x2="673.10" y2="472.76" stroke="#E3E9DA" stroke-width="0.75" /><line x1="225.40" y1="468.50" x2="673.10" y2="468.50" stroke="#E3E9DA" stroke-width="0.75" /><line x1="225.40" y1="464.23" x2="673.10" y2="464.23" stroke="#E3E9DA" stroke-width="0.75" /><line x1="225.40" y1="459.96" x2="673.10" y2="459.96" stroke="#E3E9DA" stroke-width="0.75" /><line x1="225.40" y1="455.70" x2="673.10" y2="455.70" stroke="#E3E9DA" stroke-width="0.75" /><line x1="225.40" y1="451.43" x2="673.10" y2="451.43" stroke="#E3E9DA" stroke-width="0.75" /><line x1="225.40" y1="447.17" x2="673.10" y2="447.17" stroke="#E3E9DA" stroke-width="0.75" /><line x1="225.40" y1="442.90" x2="673.10" y2="442.90" stroke="#E3E9DA" stroke-width="0.75" /><line x1="225.40" y1="438.63" x2="673.10" y2="438.63" stroke="#E3E9DA" stroke-width="0.75" /><line x1="225.40" y1="434.37" x2="673.10" y2="434.37" stroke="#E3E9DA" stroke-width="0.75" /><line x1="225.40" y1="425.83" x2="673.10" y2="425.83" stroke="#E3E9DA" stroke-width="0.75" /><line x1="225.40" y1="421.57" x2="673.10" y2="421.57" stroke="#E3E9DA" stroke-width="0.75" /><line x1="225.40" y1="417.30" x2="673.10" y2="417.30" stroke="#E3E9DA" stroke-width="0.75" /><line x1="225.40" y1="413.03" x2="673.10" y2="413.03" stroke="#E3E9DA" stroke-width="0.75" /><line x1="225.40" y1="408.77" x2="673.10" y2="408.77" stroke="#E3E9DA" stroke-width="0.75" /><line x1="225.40" y1="404.50" x2="673.10" y2="404.50" stroke="#E3E9DA" stroke-width="0.75" /><line x1="225.40" y1="400.24" x2="673.10" y2="400.24" stroke="#E3E9DA" stroke-width="0.75" /><line x1="225.40" y1="395.97" x2="673.10" y2="395.97" stroke="#E3E9DA" stroke-width="0.75" /><line x1="225.40" y1="391.70" x2="673.10" y2="391.70" stroke="#E3E9DA" stroke-width="0.75" /><line x1="225.40" y1="387.44" x2="673.10" y2="387.44" stroke="#E3E9DA" stroke-width="0.75" /><line x1="225.40" y1="378.90" x2="673.10" y2="378.90" stroke="#E3E9DA" stroke-width="0.75" /><line x1="225.40" y1="374.64" x2="673.10" y2="374.64" stroke="#E3E9DA" stroke-width="0.75" /><line x1="225.40" y1="370.37" x2="673.10" y2="370.37" stroke="#E3E9DA" stroke-width="0.75" /><line x1="225.40" y1="366.10" x2="673.10" y2="366.10" stroke="#E3E9DA" stroke-width="0.75" /><line x1="225.40" y1="361.84" x2="673.10" y2="361.84" stroke="#E3E9DA" stroke-width="0.75" /><line x1="225.40" y1="357.57" x2="673.10" y2="357.57" stroke="#E3E9DA" stroke-width="0.75" /><line x1="225.40" y1="353.31" x2="673.10" y2="353.31" stroke="#E3E9DA" stroke-width="0.75" /><line x1="225.40" y1="349.04" x2="673.10" y2="349.04" stroke="#E3E9DA" stroke-width="0.75" /><line x1="225.40" y1="344.77" x2="673.10" y2="344.77" stroke="#E3E9DA" stroke-width="0.75" /><line x1="225.40" y1="340.51" x2="673.10" y2="340.51" stroke="#E3E9DA" stroke-width="0.75" /><line x1="225.40" y1="331.97" x2="673.10" y2="331.97" stroke="#E3E9DA" stroke-width="0.75" /><line x1="225.40" y1="327.71" x2="673.10" y2="327.71" stroke="#E3E9DA" stroke-width="0.75" /><line x1="225.40" y1="323.44" x2="673.10" y2="323.44" stroke="#E3E9DA" stroke-width="0.75" /><line x1="225.40" y1="319.17" x2="673.10" y2="319.17" stroke="#E3E9DA" stroke-width="0.75" /><line x1="225.40" y1="314.91" x2="673.10" y2="314.91" stroke="#E3E9DA" stroke-width="0.75" /><line x1="225.40" y1="310.64" x2="673.10" y2="310.64" stroke="#E3E9DA" stroke-width="0.75" /><line x1="225.40" y1="306.38" x2="673.10" y2="306.38" stroke="#E3E9DA" stroke-width="0.75" /><line x1="225.40" y1="302.11" x2="673.10" y2="302.11" stroke="#E3E9DA" stroke-width="0.75" /><line x1="225.40" y1="297.84" x2="673.10" y2="297.84" stroke="#E3E9DA" stroke-width="0.75" /><line x1="225.40" y1="293.58" x2="673.10" y2="293.58" stroke="#E3E9DA" stroke-width="0.75" /><line x1="225.40" y1="285.04" x2="673.10" y2="285.04" stroke="#E3E9DA" stroke-width="0.75" /><line x1="225.40" y1="280.78" x2="673.10" y2="280.78" stroke="#E3E9DA" stroke-width="0.75" /><line x1="225.40" y1="276.51" x2="673.10" y2="276.51" stroke="#E3E9DA" stroke-width="0.75" /><line x1="225.40" y1="272.24" x2="673.10" y2="272.24" stroke="#E3E9DA" stroke-width="0.75" /><line x1="225.40" y1="267.98" x2="673.10" y2="267.98" stroke="#E3E9DA" stroke-width="0.75" /><line x1="225.40" y1="263.71" x2="673.10" y2="263.71" stroke="#E3E9DA" stroke-width="0.75" /><line x1="225.40" y1="259.45" x2="673.10" y2="259.45" stroke="#E3E9DA" stroke-width="0.75" /><line x1="225.40" y1="255.18" x2="673.10" y2="255.18" stroke="#E3E9DA" stroke-width="0.75" /><line x1="225.40" y1="250.91" x2="673.10" y2="250.91" stroke="#E3E9DA" stroke-width="0.75" /><line x1="225.40" y1="246.65" x2="673.10" y2="246.65" stroke="#E3E9DA" stroke-width="0.75" /><line x1="225.40" y1="477.03" x2="673.10" y2="477.03" stroke="#D7DAD0" stroke-width="0.8" /><line x1="225.40" y1="383.17" x2="673.10" y2="383.17" stroke="#D7DAD0" stroke-width="0.8" /><line x1="225.40" y1="336.24" x2="673.10" y2="336.24" stroke="#D7DAD0" stroke-width="0.8" /><line x1="225.40" y1="289.31" x2="673.10" y2="289.31" stroke="#D7DAD0" stroke-width="0.8" /><line x1="225.40" y1="242.38" x2="673.10" y2="242.38" stroke="#D7DAD0" stroke-width="0.8" /><line x1="301.40" y1="242.38" x2="301.40" y2="477.03" stroke="#D7DAD0" stroke-width="0.8" /><text x="301.40" y="487.00" font-size="7.0" fill="#2F6A1A" text-anchor="middle" font-weight="bold" transform="rotate(0.06 301.40 487.00)" stroke="#2F6A1A" stroke-width="0.2">5000</text><line x1="379.27" y1="242.38" x2="379.27" y2="477.03" stroke="#D7DAD0" stroke-width="0.8" /><text x="379.27" y="487.00" font-size="7.0" fill="#2F6A1A" text-anchor="middle" font-weight="bold" transform="rotate(0.06 379.27 487.00)" stroke="#2F6A1A" stroke-width="0.2">10000</text><line x1="457.15" y1="242.38" x2="457.15" y2="477.03" stroke="#D7DAD0" stroke-width="0.8" /><text x="457.15" y="487.00" font-size="7.0" fill="#2F6A1A" text-anchor="middle" font-weight="bold" transform="rotate(0.06 457.15 487.00)" stroke="#2F6A1A" stroke-width="0.2">15000</text><line x1="535.02" y1="242.38" x2="535.02" y2="477.03" stroke="#D7DAD0" stroke-width="0.8" /><text x="535.02" y="487.00" font-size="7.0" fill="#2F6A1A" text-anchor="middle" font-weight="bold" transform="rotate(0.06 535.02 487.00)" stroke="#2F6A1A" stroke-width="0.2">20000</text><line x1="612.90" y1="242.38" x2="612.90" y2="477.03" stroke="#D7DAD0" stroke-width="0.8" /><text x="612.90" y="487.00" font-size="7.0" fill="#2F6A1A" text-anchor="middle" font-weight="bold" transform="rotate(0.06 612.90 487.00)" stroke="#2F6A1A" stroke-width="0.2">25000</text><line x1="225.40" y1="242.38" x2="225.40" y2="477.03" stroke="#5E5E5E" stroke-width="0.9" /><line x1="225.40" y1="430.10" x2="673.10" y2="430.10" stroke="#555555" stroke-width="1.0" /><line x1="222.20" y1="477.03" x2="228.70" y2="477.03" stroke="#5E5E5E" stroke-width="0.9" /><text x="218.20" y="479.53" font-size="7.0" fill="#2F6A1A" text-anchor="end" font-weight="bold" transform="rotate(0.06 218.20 479.53)" stroke="#2F6A1A" stroke-width="0.2">-250</text><line x1="222.20" y1="430.10" x2="228.70" y2="430.10" stroke="#5E5E5E" stroke-width="0.9" /><text x="218.20" y="432.60" font-size="7.0" fill="#2F6A1A" text-anchor="end" font-weight="bold" transform="rotate(0.06 218.20 432.60)" stroke="#2F6A1A" stroke-width="0.2">0</text><line x1="222.20" y1="383.17" x2="228.70" y2="383.17" stroke="#5E5E5E" stroke-width="0.9" /><text x="218.20" y="385.67" font-size="7.0" fill="#2F6A1A" text-anchor="end" font-weight="bold" transform="rotate(0.06 218.20 385.67)" stroke="#2F6A1A" stroke-width="0.2">250</text><line x1="222.20" y1="336.24" x2="228.70" y2="336.24" stroke="#5E5E5E" stroke-width="0.9" /><text x="218.20" y="338.74" font-size="7.0" fill="#2F6A1A" text-anchor="end" font-weight="bold" transform="rotate(0.06 218.20 338.74)" stroke="#2F6A1A" stroke-width="0.2">500</text><line x1="222.20" y1="289.31" x2="228.70" y2="289.31" stroke="#5E5E5E" stroke-width="0.9" /><text x="218.20" y="291.81" font-size="7.0" fill="#2F6A1A" text-anchor="end" font-weight="bold" transform="rotate(0.06 218.20 291.81)" stroke="#2F6A1A" stroke-width="0.2">750</text><line x1="222.20" y1="242.38" x2="228.70" y2="242.38" stroke="#5E5E5E" stroke-width="0.9" /><text x="218.20" y="244.88" font-size="7.0" fill="#2F6A1A" text-anchor="end" font-weight="bold" transform="rotate(0.06 218.20 244.88)" stroke="#2F6A1A" stroke-width="0.2">1000</text><line x1="371.00" y1="223.70" x2="377.80" y2="223.70" stroke="#E69138" stroke-width="1.8" /><text x="382.30" y="226.40" font-size="8.6" fill="#222222" text-anchor="start" font-weight="bold" transform="rotate(0.06 382.30 226.40)" textLength="11.8" lengthAdjust="spacingAndGlyphs">RB</text><line x1="402.50" y1="223.70" x2="409.10" y2="223.70" stroke="#1155CC" stroke-width="1.8" /><text x="413.70" y="226.10" font-size="9.36" fill="#222222" text-anchor="start" font-weight="bold" transform="rotate(0.06 413.70 226.10)" >Result</text><line x1="451.00" y1="223.70" x2="457.60" y2="223.70" stroke="#38761D" stroke-width="1.8" /><text x="461.70" y="226.40" font-size="8.6" fill="#222222" text-anchor="start" font-weight="bold" transform="rotate(0.06 461.70 226.40)" textLength="42.3" lengthAdjust="spacingAndGlyphs">RB+Result</text><path d="M225.70 430.10 C240.47 429.00 255.23 428.03 270.00 426.80 C280.00 425.97 290.00 424.97 300.00 424.00 C310.00 423.03 320.00 421.87 330.00 421.00 C338.67 420.25 347.33 419.89 356.00 419.00 C360.67 418.52 365.33 417.43 370.00 417.00 C382.67 415.82 395.33 415.86 408.00 414.60 C412.00 414.20 416.00 413.11 420.00 412.60 C426.67 411.75 433.33 411.17 440.00 410.60 C445.33 410.15 450.67 409.74 456.00 409.40 C460.67 409.10 465.33 408.91 470.00 408.60 C480.00 407.93 490.00 406.70 500.00 406.00 C511.33 405.20 522.67 404.65 534.00 404.00 C540.00 403.66 546.00 403.42 552.00 403.00 C559.23 402.49 566.47 401.70 573.70 400.90 C584.57 399.70 595.43 397.36 606.30 396.60 C610.87 396.28 615.43 396.29 620.00 395.90 C622.87 395.66 625.73 394.58 628.60 394.20 C635.43 393.29 642.27 393.08 649.10 392.30 C651.97 391.97 654.83 391.41 657.70 391.10 C662.83 390.55 667.97 390.23 673.10 389.80" fill="none" stroke="#E69138" stroke-width="2.3" stroke-linejoin="round" stroke-linecap="round"/><path d="M225.70 430.00 C226.17 429.17 226.63 428.04 227.10 427.50 C227.83 426.65 228.57 425.75 229.30 425.70 C233.10 425.45 236.90 425.40 240.70 425.40 C241.67 425.40 242.63 428.90 243.60 428.90 C246.93 428.90 250.27 416.80 253.60 416.80 C254.53 416.80 255.47 418.84 256.40 421.40 C257.00 423.05 257.60 433.20 258.20 433.20 C259.27 433.20 260.33 425.86 261.40 424.30 C262.37 422.89 263.33 421.66 264.30 421.40 C266.23 420.89 268.17 420.60 270.10 420.60 C273.63 420.60 277.17 422.40 280.70 422.40 C281.97 422.40 283.23 421.47 284.50 420.60 C286.57 419.19 288.63 414.50 290.70 411.80 C292.77 409.10 294.83 406.14 296.90 404.30 C298.33 403.02 299.77 401.99 301.20 401.20 C303.10 400.15 305.00 399.04 306.90 398.70 C308.97 398.33 311.03 398.40 313.10 398.00 C315.60 397.52 318.10 393.26 320.60 392.40 C323.50 391.41 326.40 390.50 329.30 390.50 C333.27 390.50 337.23 396.80 341.20 396.80 C345.70 396.80 350.20 381.50 354.70 381.50 C356.00 381.50 357.30 383.95 358.60 385.70 C361.20 389.20 363.80 401.00 366.40 401.00 C368.73 401.00 371.07 399.40 373.40 398.20 C376.53 396.59 379.67 394.37 382.80 391.20 C384.60 389.38 386.40 386.92 388.20 383.40 C390.70 378.51 393.20 361.45 395.70 359.10 C396.50 358.35 397.30 357.60 398.10 357.60 C399.40 357.60 400.70 359.10 402.00 359.10 C403.97 359.10 405.93 343.10 407.90 343.10 C409.57 343.10 411.23 351.42 412.90 356.80 C414.73 362.72 416.57 373.27 418.40 378.60 C420.47 384.61 422.53 392.70 424.60 392.70 C427.20 392.70 429.80 390.79 432.40 389.60 C435.77 388.06 439.13 386.54 442.50 384.10 C445.00 382.29 447.50 378.75 450.00 376.30 C451.97 374.37 453.93 372.32 455.90 370.80 C458.23 368.99 460.57 368.03 462.90 366.20 C466.03 363.74 469.17 356.80 472.30 356.80 C476.97 356.80 481.63 358.38 486.30 360.20 C487.00 360.47 487.70 361.50 488.40 361.50 C491.87 361.50 495.33 354.22 498.80 352.90 C501.40 351.91 504.00 350.90 506.60 350.90 C508.43 350.90 510.27 352.46 512.10 354.00 C516.40 357.62 520.70 380.26 525.00 384.90 C526.47 386.48 527.93 388.30 529.40 388.30 C532.50 388.30 535.60 383.66 538.70 380.50 C544.17 374.92 549.63 357.90 555.10 357.90 C557.17 357.90 559.23 379.20 561.30 379.20 C564.17 379.20 567.03 358.17 569.90 350.80 C574.07 340.09 578.23 328.30 582.40 325.10 C585.00 323.10 587.60 321.20 590.20 321.20 C591.70 321.20 593.20 323.95 594.70 326.10 C596.50 328.68 598.30 337.80 600.10 337.80 C601.28 337.80 602.47 325.83 603.65 319.85 C604.83 313.87 606.02 303.02 607.20 301.90 C608.50 300.67 609.80 299.90 611.10 299.90 C612.65 299.90 614.20 299.90 615.75 299.90 C617.30 299.90 618.85 299.90 620.40 299.90 C622.10 299.90 623.80 311.50 625.50 317.30 C627.20 323.10 628.90 334.70 630.60 334.70 C631.50 334.70 632.40 328.47 633.30 325.35 C634.20 322.23 635.10 316.00 636.00 316.00 C638.00 316.00 640.00 320.40 642.00 322.60 C644.00 324.80 646.00 329.20 648.00 329.20 C648.47 329.20 648.93 326.60 649.40 325.30 C649.87 324.00 650.33 322.39 650.80 321.40 C652.10 318.65 653.40 315.20 654.70 315.20 C655.40 315.20 656.10 319.10 656.80 319.10 C659.45 319.10 662.10 311.30 664.75 307.40 C667.40 303.50 670.05 299.60 672.70 295.70" fill="none" stroke="#1155CC" stroke-width="2.4" stroke-linejoin="round" stroke-linecap="round"/><path d="M225.70 429.60 C226.17 428.53 226.63 426.98 227.10 426.40 C227.83 425.48 228.57 424.79 229.30 424.60 C230.97 424.16 232.63 423.90 234.30 423.90 C236.43 423.90 238.57 423.90 240.70 423.90 C241.17 423.90 241.63 425.11 242.10 425.70 C242.70 426.45 243.30 427.90 243.90 427.90 C244.50 427.90 245.10 427.00 245.70 426.40 C248.33 423.77 250.97 415.00 253.60 415.00 C254.30 415.00 255.00 415.54 255.70 416.40 C256.17 416.97 256.63 420.17 257.10 422.90 C257.47 425.05 257.83 431.40 258.20 431.40 C258.80 431.40 259.40 427.28 260.00 425.70 C260.97 423.15 261.93 419.90 262.90 419.30 C265.30 417.80 267.70 417.00 270.10 417.00 C273.63 417.00 277.17 417.80 280.70 417.80 C281.73 417.80 282.77 416.95 283.80 416.20 C285.90 414.67 288.00 409.72 290.10 406.80 C292.17 403.92 294.23 400.69 296.30 398.70 C297.93 397.13 299.57 395.95 301.20 394.90 C303.10 393.68 305.00 392.24 306.90 391.80 C308.97 391.32 311.03 391.40 313.10 390.90 C315.60 390.29 318.10 385.40 320.60 384.30 C323.50 383.03 326.40 381.80 329.30 381.80 C333.07 381.80 336.83 387.20 340.60 387.20 C345.30 387.20 350.00 370.50 354.70 370.50 C356.00 370.50 357.30 372.73 358.60 374.40 C360.93 377.40 363.27 388.10 365.60 388.10 C368.20 388.10 370.80 386.82 373.40 385.70 C376.53 384.35 379.67 381.99 382.80 378.70 C384.60 376.81 386.40 374.07 388.20 370.10 C389.23 367.82 390.27 363.43 391.30 360.00 C392.77 355.13 394.23 347.18 395.70 345.10 C396.50 343.97 397.30 342.80 398.10 342.80 C399.40 342.80 400.70 344.00 402.00 344.00 C403.97 344.00 405.93 327.90 407.90 327.90 C409.30 327.90 410.70 332.64 412.10 336.50 C413.67 340.82 415.23 351.68 416.80 356.80 C419.13 364.42 421.47 374.70 423.80 374.70 C426.13 374.70 428.47 373.39 430.80 372.40 C434.47 370.85 438.13 368.22 441.80 365.40 C444.53 363.30 447.27 360.50 450.00 357.60 C451.97 355.51 453.93 352.47 455.90 350.60 C458.23 348.38 460.57 347.14 462.90 345.10 C466.03 342.36 469.17 335.70 472.30 335.70 C476.97 335.70 481.63 337.31 486.30 338.10 C487.10 338.23 487.90 338.50 488.70 338.50 C492.07 338.50 495.43 331.15 498.80 329.50 C501.40 328.23 504.00 326.80 506.60 326.80 C508.43 326.80 510.27 328.61 512.10 330.30 C516.40 334.26 520.70 354.53 525.00 359.10 C526.47 360.66 527.93 362.50 529.40 362.50 C532.50 362.50 535.60 356.72 538.70 353.20 C544.17 346.99 549.63 330.90 555.10 330.90 C557.17 330.90 559.23 350.80 561.30 350.80 C564.17 350.80 567.03 331.82 569.90 324.30 C574.07 313.36 578.23 300.62 582.40 296.20 C585.00 293.44 587.60 290.50 590.20 290.50 C591.70 290.50 593.20 292.99 594.70 294.90 C596.50 297.20 598.30 305.10 600.10 305.10 C601.28 305.10 602.47 292.87 603.65 286.75 C604.83 280.63 606.02 269.67 607.20 268.40 C608.50 267.01 609.80 266.10 611.10 266.10 C612.65 266.10 614.20 266.10 615.75 266.10 C617.30 266.10 618.85 266.10 620.40 266.10 C622.10 266.10 623.80 277.00 625.50 282.45 C627.20 287.90 628.90 298.80 630.60 298.80 C631.50 298.80 632.40 292.30 633.30 289.05 C634.20 285.80 635.10 279.30 636.00 279.30 C637.95 279.30 639.90 283.20 641.85 285.15 C643.80 287.10 645.75 291.00 647.70 291.00 C648.22 291.00 648.73 288.40 649.25 287.10 C649.77 285.80 650.28 284.24 650.80 283.20 C652.10 280.58 653.40 277.00 654.70 277.00 C655.40 277.00 656.10 280.60 656.80 280.60 C659.45 280.60 662.10 272.10 664.75 267.85 C667.40 263.60 670.05 259.35 672.70 255.10" fill="none" stroke="#38761D" stroke-width="2.4" stroke-linejoin="round" stroke-linecap="round"/><rect x="692.83" y="121.40" width="6.00" height="492.40" fill="#FFFFFF" /><line x1="692.83" y1="121.40" x2="692.83" y2="613.80" stroke="#E4E5E5" stroke-width="0.7" /><rect x="692.83" y="145.00" width="5.20" height="2.00" fill="#E0E0E0" /><line x1="692.83" y1="121.40" x2="698.50" y2="121.40" stroke="#CFD1D1" stroke-width="0.9" /><line x1="692.83" y1="133.60" x2="698.50" y2="133.60" stroke="#E6E6E6" stroke-width="0.7" /><line x1="697.90" y1="121.40" x2="697.90" y2="613.80" stroke="#EEEEEE" stroke-width="0.6" /><rect x="694.6" y="148.6" width="3.4" height="12.9" rx="1.7" fill="#DADCE0"/><path d="M694.9 602.2 l1.5 -1.7 l1.5 1.7 z" fill="#8A8A8A"/><path d="M694.9 609.0 l1.5 1.7 l1.5 -1.7 z" fill="#8A8A8A"/><line x1="692.83" y1="605.30" x2="699.00" y2="605.30" stroke="#ECECEC" stroke-width="0.6" /><rect x="0.00" y="613.80" width="698.80" height="7.40" fill="#FFFFFF" /><rect x="39" y="615.0" width="637" height="4.6" rx="2.3" fill="#DADCE0"/><path d="M681.8 616.0 l-1.6 1.5 l1.6 1.5 z" fill="#8A8A8A"/><path d="M688.6 616.0 l1.6 1.5 l-1.6 1.5 z" fill="#8A8A8A"/><line x1="685.20" y1="613.60" x2="685.20" y2="621.00" stroke="#ECECEC" stroke-width="0.6" /><line x1="692.83" y1="613.60" x2="692.83" y2="621.00" stroke="#ECECEC" stroke-width="0.6" /><rect x="0.00" y="621.20" width="698.80" height="19.00" fill="#F9FBFD" /><line x1="0.00" y1="621.20" x2="698.80" y2="621.20" stroke="#E6E8EA" stroke-width="0.6" /><text x="53.20" y="634.20" font-size="8.0" fill="#444746" text-anchor="end" font-weight="normal" transform="rotate(0.06 53.20 634.20)" >Предыдущий_Цикл</text><path d="M59.4 630.6 h4.0 l-2.0 2.1 z" fill="#444746"/><text x="76.70" y="634.20" font-size="8.0" fill="#444746" text-anchor="start" font-weight="normal" transform="rotate(0.06 76.70 634.20)" >Soft</text><path d="M97.5 630.6 h4.0 l-2.0 2.1 z" fill="#444746"/><path d="M685.8 629.6 l-2.2 2.4 l2.2 2.4" fill="none" stroke="#444746" stroke-width="1.1"/><rect x="0.00" y="640.20" width="700.00" height="0.80" fill="#7F8698" /><rect x="698.80" y="0.00" width="1.20" height="641.00" fill="#E6E6E6" /><rect x="698.80" y="0.00" width="1.20" height="118.70" fill="#9A9A9A" /><rect x="698.80" y="118.70" width="1.20" height="21.30" fill="#9A6E74" /><rect x="698.80" y="140.00" width="1.20" height="97.00" fill="#6E8496" /><rect x="698.80" y="621.00" width="1.20" height="20.00" fill="#7A8AA8" /></svg>
</body></html>
